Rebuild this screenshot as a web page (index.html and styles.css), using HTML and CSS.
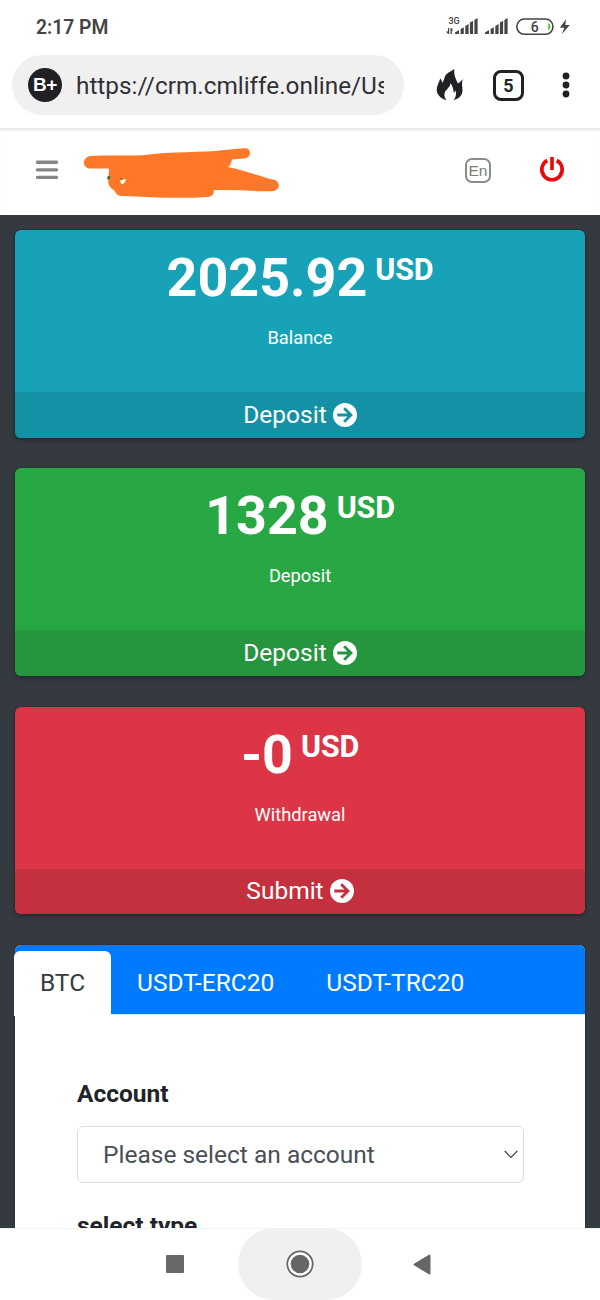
FILE: index.html
```html
<!DOCTYPE html>
<html lang="en">
<head>
<meta charset="utf-8">
<meta name="viewport" content="width=device-width">
<title>Account dashboard</title>
<link rel="stylesheet" href="styles.css">
</head>
<body>
<div class="phone">
  <header class="status">
    <span class="clock">2:17 PM</span>
    <svg class="status-icons" width="130" height="24" viewBox="444 14 130 24">
      <text class="net" x="448.500" y="23.700">3G</text>
      <g fill="#444">
        <path d="M448 28h1.200v6h-1.200l-2-2.500h2zM450.500 34v-6h1l1.800 2.500h-1.500v3.500z"/>
        <path d="M455 34v-1.500l4-2.500v4zM460.600 34v-5l3.200-1.800v6.800zM465.300 34v-8l3.300-2v10zM469.900 34v-11.500l3.200-1.800v13.300zM474.400 34v-14l3.200-2v16z"/>
        <path d="M485 34v-1.500l4-2.500v4zM490.600 34v-5l3.200-1.800v6.800zM495.300 34v-8l3.300-2v10zM499.900 34v-11.500l3.200-1.800v13.300zM504.400 34v-14l3.200-2v16z"/>
        <path d="M566 19l-6 8.700h4.300l-2.500 6.600 8-9.300h-4.500z"/>
      </g>
      <rect x="516.800" y="19" width="36.200" height="15.300" rx="7.600" fill="#fff" stroke="#444" stroke-width="1.600"/>
      <path d="M548.200 22.800q2.200 1 2.200 3.900t-2.200 3.900z" fill="#67bd35"/>
      <text class="battery" x="534.800" y="31.600">6</text>
    </svg>
  </header>

  <div class="browser">
    <div class="address">
      <span class="site-badge">B+</span>
      <span class="url">https://crm.cmliffe.online/Us</span>
    </div>
    <svg class="flame" width="28" height="34" viewBox="0 0 28 34">
      <path fill="#202124" d="M18.300 1C17.800 7 19.500 10.500 22 15.500C23.500 14.500 25 13 26.700 11C25.300 15.500 26.500 18.500 26.500 22.500C26.500 27.500 23 30.500 17.500 32.200C20 29.500 20.600 26 19.500 22.500L17.800 25C17.300 21 16.800 18 14.300 15C14.700 19.500 9.500 21 8.500 25.500C8 28 8.800 30 10.500 32.200C4.500 30.500 .7 26.500 .7 21.500C.7 17.500 3.300 14.500 4.200 10.500C5.400 12 6 13.200 6.200 14.800C8 12.500 8 10.800 9 8.500C10.300 5.200 14.200 3.800 18.300 1Z"/>
    </svg>
    <span class="tab-count">5</span>
    <svg class="dots" width="8" height="26" viewBox="0 0 8 26" fill="#202124"><circle cx="4" cy="4" r="3.400"/><circle cx="4" cy="13" r="3.400"/><circle cx="4" cy="22" r="3.400"/></svg>
  </div>

  <nav class="site-nav">
    <svg class="menu" width="22" height="20" viewBox="0 0 22 20" stroke="#858585" stroke-width="3.400" stroke-linecap="round"><path d="M1.500 2.200h19M1.500 9.900h19M1.500 17.400h19"/></svg>
    <svg class="brand" width="198" height="52" viewBox="82 146 198 52">
      <path fill="#ff7829" d="M91 155C112 154 126 155 143 154.300C171 150 202 152 224 149L244 147.300C252 146.500 252 156.500 244 157.500L232 158.500C231 163 230 165 228 166C248 170 263 177 275 179C281 182 280 190 271 190.200H257Q236 188.500 214 189C214 194 211 196 207 196C180 198 150 196 121 195C117 194.500 115.500 192 114.500 189.500C109 187 107.500 182 108.500 178L109 167.500H91C81 167 82 156 91 155Z"/>
      <path fill="#277321" d="M107.300 175.500l2.800-.7v3l-2.500 1.200zM120 176.700l3.500 1.500-2 1.200z"/>
      <path fill="#fffdf3" d="M120.500 179l5.500-1-1 3-2.500 2.500-2-2z"/>
    </svg>
    <span class="lang">En</span>
    <svg class="power" width="26" height="26" viewBox="0 0 26 26" fill="none" stroke="#e90b0b" stroke-width="3.700"><path d="M8.300 4.500a10.200 10.200 0 1 0 9.400 0M13 1v13"/></svg>
  </nav>

  <main class="content">
    <section class="card balance">
      <div class="card-body"><h2 class="amount">2025.92<sup class="currency">USD</sup></h2><p class="caption">Balance</p></div>
      <a class="card-link">Deposit <svg class="arrow" width="24" height="24" viewBox="0 0 24 24"><circle cx="12" cy="12" r="12" fill="#fff"/><path d="M4.300 12h14M11.200 5.200l6.800 6.800-6.800 6.800" fill="none" stroke="currentColor" stroke-width="2.800"/></svg></a>
    </section>
    <section class="card deposit">
      <div class="card-body"><h2 class="amount">1328<sup class="currency">USD</sup></h2><p class="caption">Deposit</p></div>
      <a class="card-link">Deposit <svg class="arrow" width="24" height="24" viewBox="0 0 24 24"><circle cx="12" cy="12" r="12" fill="#fff"/><path d="M4.300 12h14M11.200 5.200l6.800 6.800-6.800 6.800" fill="none" stroke="currentColor" stroke-width="2.800"/></svg></a>
    </section>
    <section class="card withdrawal">
      <div class="card-body"><h2 class="amount">-0<sup class="currency">USD</sup></h2><p class="caption">Withdrawal</p></div>
      <a class="card-link">Submit <svg class="arrow" width="24" height="24" viewBox="0 0 24 24"><circle cx="12" cy="12" r="12" fill="#fff"/><path d="M4.300 12h14M11.200 5.200l6.800 6.800-6.800 6.800" fill="none" stroke="currentColor" stroke-width="2.800"/></svg></a>
    </section>

    <section class="payment">
      <div class="tabs">
        <span class="tab active">BTC</span>
        <span class="tab erc">USDT-ERC20</span>
        <span class="tab trc">USDT-TRC20</span>
      </div>
      <div class="form">
        <span class="label">Account</span>
        <div class="select"><span>Please select an account</span><svg width="14" height="9" viewBox="0 0 14 9" fill="none" stroke="#444" stroke-width="1.200"><path d="M.7 1l6.300 6.500L13.300 1"/></svg></div>
        <span class="label">select type</span>
      </div>
    </section>
  </main>

  <footer class="system-nav">
    <svg width="18" height="18" viewBox="0 0 18 18"><rect width="18" height="18" rx="1" fill="#696969"/></svg>
    <span class="home"><svg width="28" height="28" viewBox="0 0 28 28"><circle cx="14" cy="14" r="12.700" fill="#fff" stroke="#666" stroke-width="1.800"/><circle cx="14" cy="14" r="9.300" fill="#666"/></svg></span>
    <svg class="back" width="18" height="21" viewBox="0 0 18 21"><path d="M1.500 10.500L16.500 1.500v18z" fill="#666" stroke="#666" stroke-width="2" stroke-linejoin="round"/></svg>
  </footer>
</div>
</body>
</html>
```

FILE: styles.css
```css
* { box-sizing: border-box; }
body { margin: 0; font-family: Roboto, sans-serif; color: #212529; }
.phone { width: 600px; height: 1300px; overflow: hidden; display: flex; flex-direction: column; background: #fff; }
.status { height: 55px; display: flex; flex: none; align-items: flex-start; justify-content: space-between; padding: 14px 26px 0 36px; }
.clock { margin-top: 1px; font-size: 19.300px; line-height: 25px; font-weight: 600; letter-spacing: 0; color: #444; }
.status-icons { flex: none; }
.net { font: 500 9px Roboto, sans-serif; fill: #444; }
.battery { font: 500 14px Roboto, sans-serif; text-anchor: middle; fill: #444; }

.browser { height: 73px; flex: none; display: flex; align-items: flex-start; }
.address { width: 392px; height: 60px; margin-left: 12px; border-radius: 30px; background: #f0f0f0; display: flex; align-items: center; }
.site-badge { width: 34px; height: 34px; margin-left: 16px; border-radius: 50%; background: #202124; color: #fff; font: 700 19px/34px "Liberation Sans", sans-serif; text-align: center; letter-spacing: -.5px; }
.url { width: 308px; margin: 2px 0 0 14px; overflow: hidden; white-space: nowrap; font-size: 24.350px; line-height: 36px; color: #303134; }
.flame { margin: 13px 0 0 32px; }
.tab-count { width: 31px; height: 31px; margin: 15px 0 0 29px; border: 3px solid #202124; border-radius: 8px; text-align: center; font-size: 18px; line-height: 26px; font-weight: 700; }
.dots { margin: 17px 0 0 38px; }

.site-nav { height: 87px; flex: none; border-top: 2px solid #eaeaea; box-shadow: inset 0 2px 2px #f7f7f7; display: flex; align-items: flex-start; }
.menu { margin: 30px 0 0 36px; }
.brand { margin: 17px 0 0 24px; }
.lang { width: 26px; height: 25px; margin: 28px 0 0 185px; border: 2px solid #8c8c8c; border-radius: 7px; text-align: center; color: #7c7c7c; font: 15.500px/22px "Liberation Sans", sans-serif; }
.power { margin: 26px 0 0 48px; }

.content { height: 1013px; flex: none; background: #343a40; padding: 15px 15px 0; display: flex; flex-direction: column; gap: 30.500px; overflow: hidden; }
.card { height: 207.750px; flex: none; border-radius: 6px; overflow: hidden; color: #fff; text-align: center; box-shadow: 0 0 2px #20252b, 0 2px 4px #252b31; }
.card-body { height: 162px; padding-top: 15px; }
.amount { margin: 0; font-size: 53.800px; line-height: 65px; font-weight: 700; letter-spacing: 0; white-space: nowrap; }
.currency { position: relative; top: -16px; vertical-align: baseline; margin-left: 8px; font-size: 30.500px; line-height: 0; letter-spacing: -.2px; }
.caption { margin: 16px 0 0; font-size: 18.300px; line-height: 24px; letter-spacing: 0; }
.card-link { height: 46px; display: flex; align-items: center; justify-content: center; gap: 6px; padding-bottom: 1px; font-size: 24.500px; line-height: 36px; }
.balance { background: #17a2b8; }
.balance .card-link { color: #fff; background: #1591a5; }
.balance .arrow { color: #1591a5; }
.deposit { background: #28a745; }
.deposit .card-link { background: #26963e; }
.deposit .arrow { color: #26963e; }
.withdrawal { background: #dc3545; }
.withdrawal .card-link { background: #c5303e; }
.withdrawal .arrow { color: #c5303e; }

.payment { height: 283px; flex: none; background: #fff; border-radius: 6px 6px 0 0; box-shadow: 0 0 2px #20252b; }
.tabs { height: 70px; display: flex; background: #007bff; border-bottom: 1px solid #d6eaff; border-radius: 6px 6px 0 0; padding-top: 6px; }
.tab { height: 65px; font-size: 24.500px; line-height: 64px; color: #fff; text-align: center; white-space: nowrap; }
.active { width: 97px; margin-left: -1px; background: #fff; color: #343a40; border-radius: 6px 6px 0 0; }
.erc { margin-left: 26px; }
.trc { margin-left: 52px; }
.form { padding: 60px 61px 0 62px; }
.label { display: block; font-size: 24.500px; line-height: 38px; font-weight: 700; }
.select { height: 57px; margin: 13px 0 24px; border: 1.500px solid #dedede; border-radius: 6px; display: flex; align-items: center; justify-content: space-between; padding: 0 5px 0 25px; font-size: 24.500px; color: #495057; }

.system-nav { height: 72px; flex: none; border-top: 1px solid #f4f4f4; display: flex; align-items: center; padding: 0 0 1px 166px; }
.home { width: 124px; height: 72px; margin-left: 54px; border-radius: 36px; background: #f0f0f0; display: grid; place-items: center; }
.back { margin-left: 51px; }
```
